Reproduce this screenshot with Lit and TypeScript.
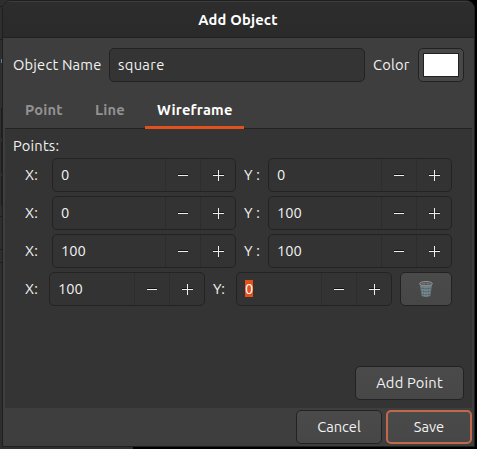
import { LitElement, html, css } from "lit";
import { customElement, property } from "lit/decorators.js";

@customElement("spin-field")
class SpinField extends LitElement {
  @property() value = "0";
  @property({ type: Boolean }) selected = false;

  static styles = css`
    :host { display: flex; box-sizing: border-box; height: 34px; border: 1px solid #232323; border-radius: 5px; background: #333; color: #f2f2f2; letter-spacing: 0; }
    .value { flex: 1; padding-left: 8px; line-height: 32px; }
    .mark { background: #e2501c; color: #fff; line-height: 17px; display: inline-block; height: 17px; }
    .step { box-sizing: border-box; width: 35px; border-left: 1px solid #2d2d2d; display: flex; }
    svg { display: block; width: 34px; height: 32px; }
  `;

  render() {
    return html`
      <div class="value">${this.selected ? html`<span class="mark">${this.value}</span>` : this.value}</div>
      <div class="step"><svg viewBox="0 0 34 32" shape-rendering="crispEdges">
        <rect x="12" y="15" width="10" height="1" fill="#141414"/><rect x="12" y="16" width="10" height="1" fill="#eee"/>
      </svg></div>
      <div class="step"><svg viewBox="0 0 34 32" shape-rendering="crispEdges">
        <rect x="12" y="15" width="11" height="1" fill="#141414"/><rect x="12" y="16" width="11" height="1" fill="#eee"/><rect x="17" y="11" width="1" height="11" fill="#eee"/>
      </svg></div>`;
  }
}

@customElement("app-root")
class AppRoot extends LitElement {
  static styles = css`
    :host { display: block; box-sizing: border-box; width: 477px; height: 449px; overflow: hidden; padding-left: 2px;
      background:
        linear-gradient(#000, #000) 133px 100% / 344px 3px no-repeat,
        linear-gradient(#5f7f9c, #5f7f9c) 1px 59px / 1px 4px no-repeat,
        linear-gradient(#1e1e1e, #1e1e1e) 0 6px / 2px 1px no-repeat,
        linear-gradient(#1e1e1e, #1e1e1e) 0 39px / 2px 1px no-repeat,
        linear-gradient(#1e1e1e, #1e1e1e) 1px 108px / 1px 30px no-repeat,
        linear-gradient(#1e1e1e, #1e1e1e) 1px 142px / 1px 31px no-repeat,
        linear-gradient(#1e1e1e, #1e1e1e) 1px 176px / 1px 30px no-repeat,
        linear-gradient(#1e1e1e, #1e1e1e) 0 216px / 2px 1px no-repeat,
        linear-gradient(#1e1e1e, #1e1e1e) 0 249px / 2px 1px no-repeat,
        linear-gradient(#1e1e1e, #1e1e1e) 0 262px / 2px 1px no-repeat,
        linear-gradient(90deg, #2e2e2e 465px, #000 465px);
      font: 14.667px/20px "Ubuntu", "Noto Sans", sans-serif; letter-spacing: .2px; color: #f2f2f2; }
    .dialog { box-sizing: border-box; width: 473px; height: 447px; border: 1px solid #1f1f1f; border-radius: 9px 9px 0 0; background: #3e3e3e; overflow: hidden; }
    .title { box-sizing: border-box; height: 37px; padding-right: 1px; border-top: 1px solid #3c3c3c; border-bottom: 1px solid #202020; background: linear-gradient(#2d2d2d, #2a2a2a); text-align: center; font-weight: 700; line-height: 36px; color: #fff; }
    .name { display: flex; align-items: center; height: 34px; padding: 10px 9px 0 10px; }
    .name .caption { width: 96px; white-space: nowrap; }
    .entry { box-sizing: border-box; width: 256px; height: 34px; border: 1px solid #222; border-radius: 5px; background: #343434; padding-left: 8px; line-height: 32px; letter-spacing: .35px; }
    .color { width: 45px; padding-left: 8px; }
    .well { box-sizing: border-box; width: 46px; height: 34px; border: 1px solid #222; border-radius: 5px; background: #484848; padding: 4px; }
    .swatch { box-sizing: border-box; height: 24px; border: 1px solid #222; background: #fff; }
    .tabs { box-sizing: border-box; height: 47px; margin: 0 2px; padding: 10px 0 0 8px; border-bottom: 1px solid #222; display: flex; font-weight: 700; color: #929292; }
    .tab { box-sizing: border-box; height: 37px; padding: 8px 12px 0; }
    .point { width: 62px; } .line { width: 70px; padding-left: 20px; }
    .tab.active { width: 99px; color: #fff; border-bottom: 3px solid #e2501c; }
    .page { box-sizing: border-box; height: 279px; margin: 0 2px; background: #343434; padding: 7px 8px 0; display: flex; flex-direction: column; }
    .heading { height: 22px; }
    .rows { display: grid; gap: 4px; padding-left: 12px; }
    .row { display: flex; align-items: center; height: 34px; }
    .lx { width: 27px; } .ly { width: 24px; margin-left: 8px; white-space: pre; }
    .row spin-field { width: 184px; }
    .last .lx { width: 24px; } .last .ly { width: 23px; }
    .last spin-field { width: 156px; }
    .btn { box-sizing: border-box; height: 34px; border: 1px solid #222; border-radius: 5px; background: linear-gradient(#4a4a4a, #474747); display: flex; align-items: center; justify-content: center; }
    .trash { width: 52px; margin-left: 8px; }
    .trash svg { width: 16px; height: 18px; }
    .add { width: 109px; margin: 60px 0 0 auto; }
    .actions { display: flex; justify-content: flex-end; gap: 4px; padding: 2px 2px 0 0; letter-spacing: 0; }
    .actions .btn { width: 86px; }
    .actions .save { border: 2px solid #c0694c; }
  `;

  points = [["0", "0"], ["0", "100"], ["100", "100"]];

  render() {
    return html`<div class="dialog">
      <div class="title">Add Object</div>
      <div class="name">
        <div class="caption">Object Name</div><div class="entry">square</div>
        <div class="color">Color</div><div class="well"><div class="swatch"></div></div>
      </div>
      <div class="tabs">
        <div class="tab point">Point</div><div class="tab line">Line</div><div class="tab active">Wireframe</div>
      </div>
      <div class="page">
        <div class="heading">Points:</div>
        <div class="rows">
          ${this.points.map(([x, y]) => html`<div class="row">
            <div class="lx">X:</div><spin-field .value=${x}></spin-field>
            <div class="ly">Y :</div><spin-field .value=${y}></spin-field>
          </div>`)}
          <div class="row last">
            <div class="lx">X:</div><spin-field value="100"></spin-field>
            <div class="ly">Y:</div><spin-field value="0" selected></spin-field>
            <div class="btn trash">${this.bin()}</div>
          </div>
        </div>
        <div class="btn add">Add Point</div>
      </div>
      <div class="actions"><div class="btn">Cancel</div><div class="btn save">Save</div></div>
    </div>`;
  }

  bin() {
    return html`<svg viewBox="0 0 16 18">
      <path d="M1.6 3.2 3.6 16Q8 18 12.4 16L14.4 3.2Z" fill="#66777e"/>
      <path d="M3.7 6 4.9 15.5M6 6.5 6.6 16.3M8 6.7V16.6M10 6.5 9.4 16.3M12.3 6 11.1 15.5" stroke="#8d9ea4" stroke-width=".7"/>
      <path d="M2.5 8Q8 10 13.5 8M2.9 11Q8 13 13.1 11M3.3 14Q8 15.7 12.7 14" stroke="#4c5a60" stroke-width=".7" fill="none"/>
      <ellipse cx="8" cy="3.6" rx="6.4" ry="2.1" fill="#565557" stroke="#999c9d" stroke-width=".9"/>
      <path d="M4 3.5H12M6 2.2V5M10 2.2V5" stroke="#85797a" stroke-width=".6"/>
    </svg>`;
  }
}
